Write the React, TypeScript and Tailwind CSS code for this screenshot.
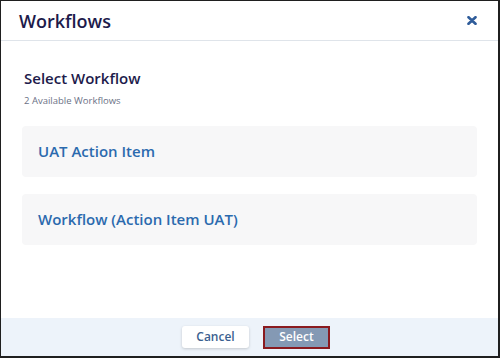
import React, { useState } from 'react';

interface Workflow {
  id: string;
  name: string;
}

const workflows: Workflow[] = [
  { id: 'uat', name: 'UAT Action Item' },
  { id: 'wf', name: 'Workflow (Action Item UAT)' },
];

const CloseIcon: React.FC = () => (
  <svg width="10" height="9" viewBox="0 0 10 9" className="block">
    <path d="M1.5 1.2 L8.5 7.8 M8.5 1.2 L1.5 7.8" stroke="#2f5c9a" strokeWidth="2.6" strokeLinecap="round" />
  </svg>
);

const App: React.FC = () => {
  const [selected, setSelected] = useState<string | null>(null);

  return (
    <div
      className="w-[500px] h-[358px] bg-white flex flex-col border-l border-t border-r-2 border-b-2 border-[#1f1f1f] overflow-hidden"
      style={{ fontFamily: '"Open Sans", "Liberation Sans", sans-serif' }}
    >
      <div className="h-[40px] shrink-0 flex items-center justify-between pl-[18px] pr-[21px] border-b border-[#dfe4ea]">
        <h1 className="text-[18px] font-semibold text-[#1d1b4b] leading-none">Workflows</h1>
        <button className="p-0">
          <CloseIcon />
        </button>
      </div>

      <div className="flex-1 px-[21px] pt-[27px]">
        <h2 className="pl-[2px] text-[15px] font-semibold text-[#1d1b4b] leading-[20px]">Select Workflow</h2>
        <p className="pl-[2px] text-[9.5px] text-[#6b7186] mt-[6px] leading-[14px]">2 Available Workflows</p>

        <div className="mt-[18px] flex flex-col gap-[17px]">
          {workflows.map(wf => (
            <button
              key={wf.id}
              onClick={() => setSelected(wf.id)}
              className={`h-[51px] w-full rounded-[4px] bg-[#f7f7f8] text-left pl-[16px] text-[15px] font-semibold text-[#2b6aae] ${selected === wf.id ? 'ring-1 ring-[#2b6aae]' : ''}`}
            >
              {wf.name}
            </button>
          ))}
        </div>
      </div>

      <div className="h-[38px] shrink-0 bg-[#edf3fa] flex items-center justify-center gap-[14px] pl-[13px]">
        <button className="w-[67px] h-[22px] rounded-[3px] bg-white shadow-[0_1px_3px_rgba(0,0,0,0.18)] text-[12px] font-semibold text-[#3b5f90]">
          Cancel
        </button>
        <button className="w-[67px] h-[23px] bg-[#8499b4] border-2 border-[#8a1a1f] text-[12px] font-semibold text-white">
          Select
        </button>
      </div>
    </div>
  );
};

export default App;
